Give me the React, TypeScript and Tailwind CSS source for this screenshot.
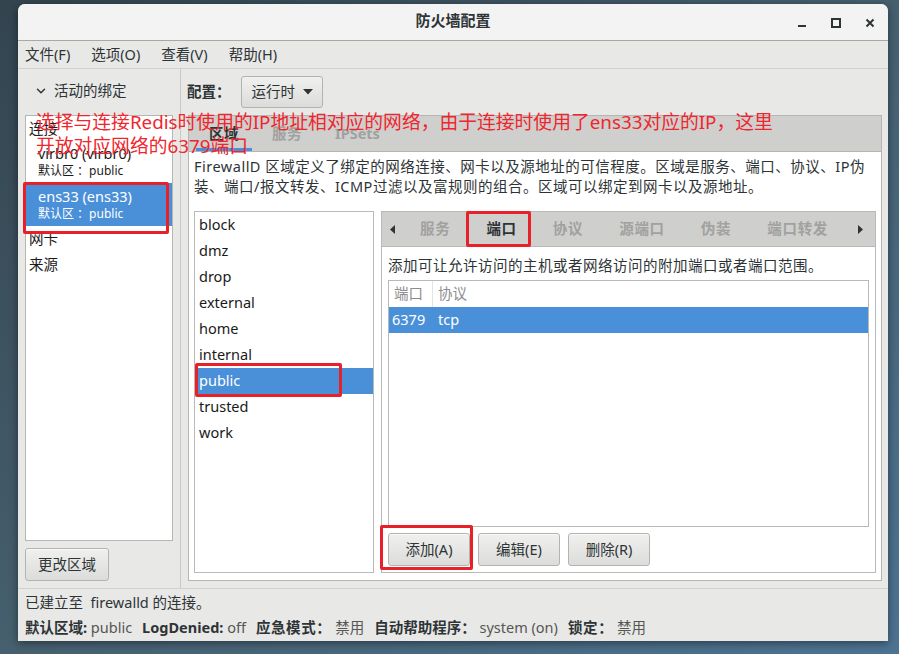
import React from "react";
import { ChevronDown } from "lucide-react";

const zones = ["block", "dmz", "drop", "external", "home", "internal", "public", "trusted", "work"];

const innerTabs = [
  { label: "服务", active: false },
  { label: "端口", active: true },
  { label: "协议", active: false },
  { label: "源端口", active: false },
  { label: "伪装", active: false },
  { label: "端口转发", active: false },
];

function GtkButton({ label, className }: { label: string; className?: string }) {
  return (
    <div
      className={
        "flex items-center justify-center rounded-[3px] border border-[#b3b3b0] bg-gradient-to-b from-[#f0f0ef] to-[#dcdcda] text-[14.5px] text-[#2e3436] shadow-[inset_0_1px_0_#fafafa] " +
        (className ?? "")
      }
    >
      {label}
    </div>
  );
}

function TitleBar() {
  return (
    <div className="flex h-[37px] shrink-0 items-center rounded-t-[7px] border-b border-[#a8a8a6] bg-[#f3f3f3]">
      <div className="w-[104px]" />
      <div className="flex-1 pb-[4px] text-center text-[15px] font-bold text-[#2e3436]">防火墙配置</div>
      <div className="flex h-full w-[104px] items-center justify-end pr-[1px] pt-[2px]">
        <div className="flex h-[34px] w-[34px] items-center justify-center">
          <svg width="10" height="10" viewBox="0 0 10 10">
            <rect x="1" y="7" width="8" height="2" fill="#2e3436" />
          </svg>
        </div>
        <div className="flex h-[34px] w-[34px] items-center justify-center">
          <svg width="10" height="10" viewBox="0 0 10 10">
            <rect x="1" y="1" width="8" height="8" fill="none" stroke="#2e3436" strokeWidth="2" />
          </svg>
        </div>
        <div className="flex h-[34px] w-[34px] items-center justify-center">
          <svg width="10" height="10" viewBox="0 0 10 10">
            <path d="M1.5 1.5 L8.5 8.5 M8.5 1.5 L1.5 8.5" stroke="#2e3436" strokeWidth="2" />
          </svg>
        </div>
      </div>
    </div>
  );
}

function MenuBar() {
  return (
    <div className="flex h-[28px] shrink-0 items-center gap-[21px] border-b border-[#d0d0cd] pl-[7px] text-[14.5px] text-[#2e3436]">
      <span>文件(F)</span>
      <span>选项(O)</span>
      <span>查看(V)</span>
      <span>帮助(H)</span>
    </div>
  );
}

function LeftPane() {
  return (
    <div className="flex w-[163px] shrink-0 flex-col border-r border-[#c8c8c5] px-[7px] pb-[7px] pt-[9px]">
      <div className="mb-[11px] flex h-[26px] items-center gap-[6px] pl-[9px] text-[14.5px] text-[#2e3436]">
        <ChevronDown size={14} strokeWidth={2.5} color="#2e3436" />
        <span>活动的绑定</span>
      </div>
      <div className="flex flex-1 flex-col border border-[#b6b6b3] bg-white text-[#1a1a1a]">
        <div className="flex h-[25px] items-center pl-[3px] text-[14.5px]">连接</div>
        <div className="flex h-[42px] flex-col justify-center pl-[12px]">
          <span className="text-[14.5px] leading-[18px]">virbr0 (virbr0)</span>
          <span className="text-[12px] leading-[18px]">默认区 ：public</span>
        </div>
        <div className="flex h-[43px] flex-col justify-center bg-[#4a90d9] pl-[12px] text-white">
          <span className="text-[14.5px] leading-[18px]">ens33 (ens33)</span>
          <span className="text-[12px] leading-[18px]">默认区 ：public</span>
        </div>
        <div className="flex h-[26px] items-center pl-[3px] text-[14.5px]">网卡</div>
        <div className="flex h-[25px] items-center pl-[3px] text-[14.5px]">来源</div>
      </div>
      <GtkButton label="更改区域" className="mt-[7px] h-[33px] w-[84px]" />
    </div>
  );
}

function PortsPanel() {
  return (
    <div className="flex w-[495px] shrink-0 flex-col border border-[#b9b9b7]">
      <div className="flex h-[35px] shrink-0 items-center border-b border-[#b9b9b7] bg-[#cfcfcd] text-[14.5px] font-bold tracking-[0.7px]">
        <div className="flex w-[20px] justify-center">
          <svg width="5" height="9" viewBox="0 0 5 9">
            <path d="M5 0 L0 4.5 L5 9 Z" fill="#2e3436" />
          </svg>
        </div>
        {innerTabs.map((t) => (
          <div key={t.label} className={"px-[18px] " + (t.active ? "text-[#2e3436]" : "text-[#a1a1a0]")}>
            {t.label}
          </div>
        ))}
        <div className="flex flex-1 justify-center">
          <svg width="5" height="9" viewBox="0 0 5 9">
            <path d="M0 0 L5 4.5 L0 9 Z" fill="#2e3436" />
          </svg>
        </div>
      </div>
      <div className="flex flex-1 flex-col bg-white px-[6px] pb-[6px] pt-[8px]">
        <div className="h-[20px] whitespace-nowrap text-[14.5px] leading-[20px] tracking-[0.5px] text-[#2e3436]">
          添加可让允许访问的主机或者网络访问的附加端口或者端口范围。
        </div>
        <div className="mt-[5px] flex h-[247px] flex-col border border-[#b9b9b7] text-[14.5px]">
          <div className="flex h-[26px] items-center text-[#8d8d8d]">
            <div className="flex h-full w-[44px] items-center border-r border-[#e4e4e2] pl-[5px]">端口</div>
            <div className="pl-[5px]">协议</div>
          </div>
          <div className="flex h-[26px] items-center bg-[#4a90d9] text-white">
            <div className="w-[45px] pl-[3px]">6379</div>
            <div className="pl-[4px]">tcp</div>
          </div>
        </div>
        <div className="mt-[6px] flex gap-[8px]">
          <GtkButton label="添加(A)" className="h-[33px] w-[82px]" />
          <GtkButton label="编辑(E)" className="h-[33px] w-[82px]" />
          <GtkButton label="删除(R)" className="h-[33px] w-[82px]" />
        </div>
      </div>
    </div>
  );
}

function RightPane() {
  return (
    <div className="flex flex-1 flex-col px-[7px] pb-[7px] pt-[7px]">
      <div className="flex h-[32px] items-center gap-[10px] text-[14.5px] text-[#2e3436]">
        <span className="-ml-[1px] font-bold">配置：</span>
        <div className="flex h-[32px] w-[82px] items-center gap-[8px] rounded-[3px] border border-[#b3b3b0] bg-gradient-to-b from-[#f0f0ef] to-[#dcdcda] pl-[10px]">
          <span>运行时</span>
          <svg width="10" height="6" viewBox="0 0 10 6">
            <path d="M0 0 L10 0 L5 5.5 Z" fill="#2e3436" />
          </svg>
        </div>
      </div>
      <div className="mt-[7px] flex flex-1 flex-col border border-[#b5b5b3]">
        <div className="flex h-[36px] shrink-0 items-stretch gap-[7px] border-b border-[#b5b5b3] bg-[#cfcfcd] pl-[7px] text-[14.5px] font-bold">
          <div className="flex items-center border-b-[3px] border-[#4a90d9] px-[13px] pt-[3px] tracking-[0.5px] text-[#2e3436]">区域</div>
          <div className="flex items-center px-[13px] tracking-[0.5px] text-[#a1a1a0]">服务</div>
          <div className="flex items-center px-[13px] text-[#a1a1a0]">IPSets</div>
        </div>
        <div className="flex flex-1 flex-col bg-white px-[5px] pb-[7px] pt-[4px]">
          <div className="text-[14.5px] leading-[20px] tracking-[0.5px] text-[#2e3436]">
            <div className="whitespace-nowrap">FirewallD 区域定义了绑定的网络连接、网卡以及源地址的可信程度。区域是服务、端口、协议、IP伪</div>
            <div className="whitespace-nowrap">装、端口/报文转发、ICMP过滤以及富规则的组合。区域可以绑定到网卡以及源地址。</div>
          </div>
          <div className="mt-[15px] flex flex-1 gap-[7px]">
            <div className="flex w-[180px] shrink-0 flex-col border border-[#b9b9b7] text-[14.5px] text-[#1a1a1a]">
              {zones.map((z) => (
                <div
                  key={z}
                  className={"flex h-[26px] items-center pl-[4px] " + (z === "public" ? "bg-[#4a90d9] text-white" : "")}
                >
                  {z}
                </div>
              ))}
            </div>
            <PortsPanel />
          </div>
        </div>
      </div>
    </div>
  );
}

function StatusBar() {
  return (
    <div className="flex h-[54px] shrink-0 flex-col gap-[5px] border-t border-[#d0d0cd] px-[7px] pt-[3px] text-[14.5px] leading-[20px] text-[#2e3436]">
      <div>已建立至&nbsp; firewalld 的连接。</div>
      <div className="flex items-center gap-[10px] whitespace-nowrap">
        <span>
          <b>默认区域:</b> <span className="text-[#555753]">public</span>
        </span>
        <span>
          <b>LogDenied:</b> <span className="text-[#555753]">off</span>
        </span>
        <span>
          <b className="tracking-[0.6px]">应急模式：</b> <span className="text-[#555753]">禁用</span>
        </span>
        <span>
          <b>自动帮助程序：</b> <span className="text-[#555753]">system (on)</span>
        </span>
        <span>
          <b className="tracking-[0.6px]">锁定：</b> <span className="text-[#555753]">禁用</span>
        </span>
      </div>
    </div>
  );
}

function Annotations() {
  return (
    <>
      <div className="pointer-events-none absolute left-[36px] top-[110px] whitespace-nowrap text-[18.8px] leading-[24px] text-[#f0262e]">
        <div>选择与连接Redis时使用的IP地址相对应的网络，由于连接时使用了ens33对应的IP，这里</div>
        <div>开放对应网络的6379端口</div>
      </div>
      <div className="pointer-events-none absolute left-[23px] top-[182px] h-[52px] w-[146px] rounded-[2px] border-[3px] border-[#e8202a]" />
      <div className="pointer-events-none absolute left-[466px] top-[211px] h-[36px] w-[65px] rounded-[2px] border-[3px] border-[#e8202a]" />
      <div className="pointer-events-none absolute left-[195px] top-[363px] h-[34px] w-[147px] rounded-[2px] border-[3px] border-[#e8202a]" />
      <div className="pointer-events-none absolute left-[380px] top-[525px] h-[45px] w-[93px] rounded-[2px] border-[3px] border-[#e8202a]" />
    </>
  );
}

export default function App() {
  return (
    <div className="relative h-[654px] w-[899px] overflow-hidden bg-gradient-to-br from-[#33444f] via-[#46606f] to-[#4d7393] pl-[18px] pt-[4px] font-['Noto_Sans','Noto_Sans_CJK_SC',sans-serif]">
      <div className="flex h-[637px] w-[870px] flex-col rounded-t-[7px] bg-[#e8e8e7] shadow-[0_2px_8px_rgba(0,0,0,0.45)]">
        <TitleBar />
        <MenuBar />
        <div className="flex flex-1">
          <LeftPane />
          <RightPane />
        </div>
        <StatusBar />
      </div>
      <Annotations />
    </div>
  );
}
